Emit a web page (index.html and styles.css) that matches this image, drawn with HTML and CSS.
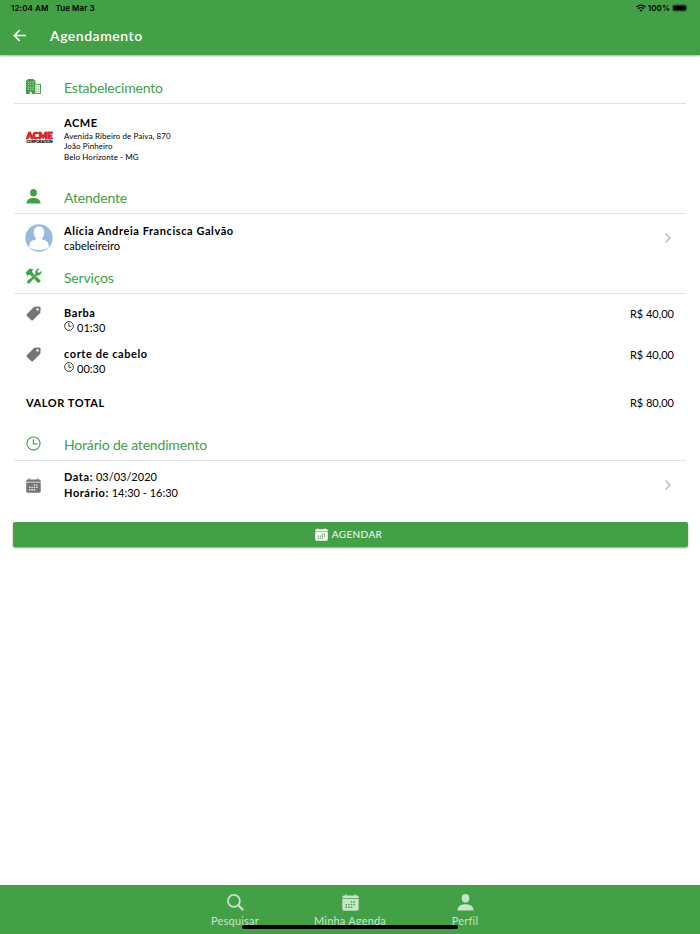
FILE: index.html
```html
<!DOCTYPE html>
<html lang="pt-BR">
  <head>
    <meta charset="UTF-8">
    <meta name="viewport" content="width=device-width, initial-scale=1.0">
    <title>Agendamento</title>
    <link rel="stylesheet" href="styles.css">
  </head>
  <body>
    <!-- Shared icons -->
    <svg class="sprite" aria-hidden="true">
      <symbol id="person" viewBox="0 0 16 16">
        <ellipse cx="8" cy="4" rx="3.600" ry="4"/>
        <path d="M.5 15.500C.5 11.500 3.500 9.600 8 9.600s7.500 1.900 7.500 5.900z"/>
      </symbol>
      <symbol id="calendar" viewBox="0 0 16 16">
        <path d="M2 1.500h1V.3h1v1.200h8V.3h1v1.200h1A1.500 1.500 0 0 1 15.700 3v1H.3V3A1.500 1.500 0 0 1 2 1.500z"/>
        <path fill-rule="evenodd" d="M.3 4.700h15.400V14a1.700 1.700 0 0 1-1.700 1.700H2A1.700 1.700 0 0 1 .3 14zM8.300 6.800v1.400h1.400V6.800zM10.800 6.800v1.400h1.400V6.800zM5.800 9.300v1.400h1.400V9.300zM3.300 9.300v1.400h1.400V9.300zM8.300 9.300v1.400h1.400V9.300zM10.800 9.300v1.400h1.400V9.300zM3.300 11.800v1.400h1.400v-1.400zM5.800 11.800v1.400h1.400v-1.400zM8.300 11.800v1.400h1.400v-1.400z"/>
      </symbol>
      <symbol id="clock" viewBox="0 0 16 16">
        <circle cx="8" cy="8" r="7" fill="none" stroke="currentColor" stroke-width="1.200"/>
        <path d="M7.800 3.500v4.900h4" fill="none" stroke="currentColor" stroke-width="1.200"/>
      </symbol>
      <symbol id="tag" viewBox="0 0 16 16">
        <path fill-rule="evenodd" d="M9.200.8 14 .4Q15.600.4 15.600 2l-.3 4.800q-.1.600-.5 1L7.300 15.200q-.8.700-1.600 0L.8 10.300q-.7-.8 0-1.600L8.200 1.300q.4-.4 1-.5zM12.300 2.300a1.300 1.300 0 1 0 0 2.600 1.300 1.300 0 0 0 0-2.600z"/>
      </symbol>
      <symbol id="chevron" viewBox="0 0 8 12">
        <path d="m1.500 1.500 4.500 4.500-4.500 4.500" fill="none" stroke="currentColor" stroke-width="1.300"/>
      </symbol>
    </svg>

    <header class="header">
      <div class="status">
        <span>12:04 AM</span>
        <span class="status-date">Tue Mar 3</span>
        <div class="status-right">
          <svg class="wifi" viewBox="0 0 10 8">
            <path d="M.6 3a6.300 6.300 0 0 1 8.800 0M2.200 4.700a4 4 0 0 1 5.600 0" fill="none" stroke="currentColor" stroke-width="1.300"/>
            <path d="M5 7.700 3.600 6.200a2 2 0 0 1 2.800 0z"/>
          </svg>
          <span>100%</span>
          <svg class="battery" viewBox="0 0 18 8">
            <rect x=".5" y=".5" width="15" height="7" rx="2" fill="none" stroke="#2a642d"/>
            <rect x="1.300" y="1.300" width="13.400" height="5.400" rx="1"/>
            <path d="M16.500 2.800q1 .3 1 1.200t-1 1.200z" fill="#2a642d"/>
          </svg>
        </div>
      </div>
      <div class="toolbar">
        <svg class="back" viewBox="0 0 12 12">
          <path d="M12 6H1.300M6.200 1 1.200 6l5 5" fill="none" stroke="currentColor" stroke-width="1.500"/>
        </svg>
        <h1 class="title">Agendamento</h1>
      </div>
    </header>

    <main class="content">
      <section class="section">
        <div class="section-head">
          <svg class="icon" viewBox="0 0 16 16">
            <path fill-rule="evenodd" d="M0 1.200h1.500V0h6.800v1.200H10V16H6v-2.500H4V16H0zM2 3v1h1V3zm2.500 0v1h1V3zM7 3v1h1V3zM2 5.500v1h1v-1zm2.500 0v1h1v-1zm2.500 0v1h1v-1zM2 8v1h1V8zm2.500 0v1h1V8zM7 8v1h1V8zm-5 2.500v1h1v-1zm2.500 0v1h1v-1zm2.500 0v1h1v-1z"/>
            <path d="M10 5.700h5.400v9.800H10M11 8.300h1m1 0h1m-3 2.500h1m1 0h1m-3 2.500h1m1 0h1" fill="none" stroke="currentColor" stroke-width="1.100"/>
          </svg>
          <h2>Estabelecimento</h2>
        </div>
        <div class="row row-place">
          <svg class="logo" viewBox="0 0 27 13">
            <g class="logo-name">
              <text class="logo-shadow" x=".6" y="7.300" textLength="26" lengthAdjust="spacingAndGlyphs">ACME</text>
              <text x=".3" y="7" textLength="26" lengthAdjust="spacingAndGlyphs">ACME</text>
            </g>
            <text class="logo-sub" x=".5" y="11" textLength="26" lengthAdjust="spacingAndGlyphs">CORPORATION</text>
          </svg>
          <div class="info">
            <h3>ACME</h3>
            <p class="address">Avenida Ribeiro de Paiva, 870<br>João Pinheiro<br>Belo Horizonte - MG</p>
          </div>
        </div>
      </section>

      <section class="section">
        <div class="section-head">
          <svg class="icon"><use href="#person"/></svg>
          <h2>Atendente</h2>
        </div>
        <div class="row row-person">
          <svg class="avatar" viewBox="0 0 28 28">
            <circle cx="14" cy="14" r="13.700" fill="#95bbe0"/>
            <path d="M14 2.600c3.400 0 5.200 2.400 5.200 5.800 0 2.800-1 5-2.500 6.200.4 1.300 1.700 1.200 3.800 1.800 2.600.8 3.200 3.600 3.300 7.400Q19.600 26.200 14 26.200T4.200 23.800c.1-3.800.7-6.600 3.300-7.400 2.100-.6 3.400-.5 3.800-1.800-1.500-1.200-2.500-3.400-2.500-6.200 0-3.400 1.800-5.800 5.200-5.800z" fill="#fff"/>
          </svg>
          <div class="info">
            <h3>Alícia Andreia Francisca Galvão</h3>
            <p>cabeleireiro</p>
          </div>
          <svg class="chevron"><use href="#chevron"/></svg>
        </div>
      </section>

      <section class="section">
        <div class="section-head">
          <svg class="icon icon-tools" viewBox="0 0 16 16">
            <path d="M.2 4.500 3.700 1Q6 .2 8 1.400L6.500 3.100l.4 1.300 8.400 8.400-2.400 2.500-8.500-8.500-1.300.2-1.200 1z"/>
            <path d="M9.700 6.500Q9 3 11.300 1.300 12.600.3 14.300.7l-2.200 2.200.3 1.400 1.400.3 2.100-2.200q.6 2.700-1.300 4.400-1.400 1.200-3.200.9L4.300 15.100q-1.300 1.200-2.500 0-1-1.300.1-2.400z" stroke="#fff" stroke-width=".3"/>
          </svg>
          <h2>Serviços</h2>
        </div>
        <div class="row row-service">
          <svg class="icon icon-gray"><use href="#tag"/></svg>
          <div class="info">
            <h3>Barba</h3>
            <p class="duration"><svg class="icon-small"><use href="#clock"/></svg>01:30</p>
          </div>
          <span class="price">R$ 40,00</span>
        </div>
        <div class="row row-service">
          <svg class="icon icon-gray"><use href="#tag"/></svg>
          <div class="info">
            <h3>corte de cabelo</h3>
            <p class="duration"><svg class="icon-small"><use href="#clock"/></svg>00:30</p>
          </div>
          <span class="price">R$ 40,00</span>
        </div>
        <div class="row row-total">
          <h3>VALOR TOTAL</h3>
          <span class="price">R$ 80,00</span>
        </div>
      </section>

      <section class="section">
        <div class="section-head">
          <svg class="icon"><use href="#clock"/></svg>
          <h2>Horário de atendimento</h2>
        </div>
        <div class="row row-time">
          <svg class="icon icon-gray"><use href="#calendar"/></svg>
          <div class="info">
            <p><b>Data:</b> 03/03/2020</p>
            <p><b>Horário:</b> 14:30 - 16:30</p>
          </div>
          <svg class="chevron"><use href="#chevron"/></svg>
        </div>
      </section>

      <button class="submit">
        <svg class="submit-icon"><use href="#calendar"/></svg>
        <span>AGENDAR</span>
      </button>
    </main>

    <nav class="tabs">
      <a class="tab">
        <svg class="tab-icon" viewBox="0 0 16 16">
          <circle cx="6.500" cy="6.500" r="5.600" fill="none" stroke="currentColor" stroke-width="1.600"/>
          <path d="m10.700 10.700 4.600 4.600" stroke="currentColor" stroke-width="2"/>
        </svg>
        <span>Pesquisar</span>
      </a>
      <a class="tab">
        <svg class="tab-icon"><use href="#calendar"/></svg>
        <span>Minha Agenda</span>
      </a>
      <a class="tab">
        <svg class="tab-icon"><use href="#person"/></svg>
        <span>Perfil</span>
      </a>
      <div class="home-bar"></div>
    </nav>
  </body>
</html>
```
FILE: styles.css
```css
* {
  box-sizing: border-box;
}

body {
  display: flex;
  flex-direction: column;
  height: 934px;
  margin: 0;
  background: #fff;
  color: #000;
  font-family: Lato, sans-serif;
  font-size: 11px;
  overflow: hidden;
}

h1, h2, h3, p {
  margin: 0;
}

svg {
  display: block;
  flex: none;
  fill: currentColor;
}

.sprite {
  position: absolute;
  width: 0;
  height: 0;
}

/* Header */
.header {
  height: 55px;
  background: #43a047;
  box-shadow: 0 1px 2px rgba(0, 0, 0, 0.35);
}

.status {
  display: flex;
  align-items: center;
  height: 16px;
  padding: 0 11px;
  font-family: Inter, sans-serif;
  font-size: 8px;
  font-weight: 600;
  letter-spacing: 0.08px;
}

.status-date {
  margin-left: 7px;
}

.status-right {
  display: flex;
  align-items: center;
  gap: 2px;
  margin-left: auto;
}

.wifi {
  width: 10px;
  height: 8px;
}

.battery {
  width: 17px;
  height: 8px;
}

.toolbar {
  display: flex;
  align-items: center;
  height: 39px;
  padding-left: 13px;
  color: #fff;
}

.back {
  width: 13px;
  height: 13px;
}

.title {
  margin-left: 24px;
  padding-bottom: 1px;
  font-size: 14px;
  font-weight: 600;
  letter-spacing: 0.52px;
}

/* Content */
.content {
  flex: 1;
  padding: 18px 12px 0;
}

.section {
  padding: 0 2px;
}

.section-head {
  display: flex;
  height: 31px;
  padding: 5px 0 0 12px;
  border-bottom: 1px solid #e2e2e2;
  color: #43a047;
}

.section-head h2 {
  margin-left: 23px;
  padding-top: 1px;
  font-size: 14px;
  font-weight: 400;
  line-height: 17px;
  letter-spacing: -0.18px;
}

.icon {
  width: 15px;
  height: 15px;
  margin-top: 1px;
}

.icon-tools {
  width: 17px;
  height: 16px;
  margin: 0 -1px;
}

.icon-gray {
  color: #757575;
}

.row {
  display: flex;
  padding: 0 12px;
}

.row h3,
.row b {
  font-size: 11px;
  font-weight: 700;
  letter-spacing: 0.57px;
}

.row h3,
.row p {
  line-height: 15px;
}

.info {
  flex: 1;
}

.row-place {
  gap: 11px;
  height: 79px;
  padding-top: 11px;
}

.logo {
  width: 27px;
  height: 13px;
  margin-top: 17px;
  overflow: visible;
}

.logo-name {
  fill: #e8262b;
  stroke: #e8262b;
  stroke-width: 0.4;
  font-size: 9px;
  font-weight: 900;
}

.logo-shadow {
  fill: #5a1012;
  stroke: #5a1012;
  stroke-width: 0.7;
}

.logo-sub {
  fill: #111;
  stroke: #111;
  stroke-width: 0.2;
  font-size: 3.2px;
  font-weight: 900;
}

.row .address {
  padding-top: 1px;
  font-size: 8px;
  line-height: 10.3px;
  letter-spacing: 0.09px;
}

.row-person {
  align-items: center;
  gap: 11px;
  height: 49px;
  padding: 0 12px 1px 11px;
}

.row-person .info {
  padding-bottom: 1px;
}

.avatar {
  width: 28px;
  height: 28px;
}

.chevron {
  width: 8px;
  height: 12px;
  margin-right: 2px;
  color: #b5b5b5;
}

.row-service {
  gap: 23px;
  height: 41px;
  padding-top: 11px;
}

.duration {
  display: flex;
  gap: 3px;
}

.icon-small {
  width: 10px;
  height: 10px;
  margin-top: 1px;
}

.price {
  line-height: 17px;
}

.row-total {
  justify-content: space-between;
  align-items: flex-start;
  height: 54px;
  padding-top: 18px;
}

.row-total h3 {
  line-height: 17px;
}

.row-time {
  align-items: center;
  gap: 23px;
  height: 48px;
}

.row-time .icon {
  margin-top: 0;
}

.row-time p {
  line-height: 16px;
}

.submit {
  display: flex;
  align-items: center;
  justify-content: center;
  gap: 4px;
  width: 675px;
  height: 25px;
  margin: 13px 0 0 0.5px;
  padding: 0 3px 1px 0;
  border: 0;
  border-radius: 2px;
  background: #43a047;
  box-shadow: 0 1px 2px rgba(0, 0, 0, 0.4);
  color: #fff;
  font-family: Lato, sans-serif;
  font-size: 10px;
  letter-spacing: 0.4px;
}

.submit-icon {
  width: 13px;
  height: 13px;
}

/* Bottom navigation */
.tabs {
  position: relative;
  display: flex;
  justify-content: center;
  height: 49px;
  padding-top: 9px;
  background: #43a047;
  color: #c9e4ca;
}

.tab {
  display: flex;
  flex-direction: column;
  align-items: center;
  width: 115px;
  gap: 3px;
  font-size: 11px;
  letter-spacing: 0.2px;
  line-height: 14px;
}

.tab-icon {
  width: 17px;
  height: 17px;
}

.home-bar {
  position: absolute;
  bottom: 5px;
  left: 242px;
  width: 216px;
  height: 4px;
  border-radius: 2px;
  background: #000;
}
```
